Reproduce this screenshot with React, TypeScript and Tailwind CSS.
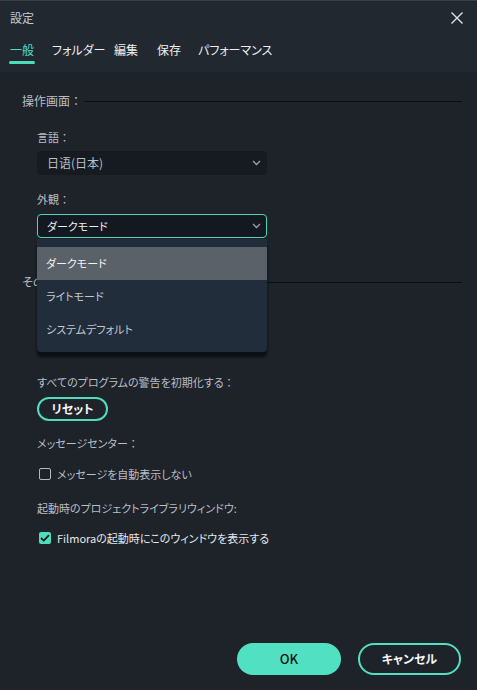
import { useState } from "react";

const font = "font-['Noto_Sans_CJK_JP','Noto_Sans',sans-serif] [font-feature-settings:'palt']";

function Chevron() {
  return (
    <svg width="9" height="6" viewBox="0 0 9 6" fill="none" className="shrink-0">
      <path d="M1 1L4.5 4.5L8 1" stroke="#9aa0a8" strokeWidth="1.3" />
    </svg>
  );
}

// full-width colon keeps its spacing even with palt on
function Colon() {
  return <span className="[font-feature-settings:normal]">：</span>;
}

function SectionHeading({ label }: { label: string }) {
  return (
    <div className="flex h-[20px] items-center pl-[22px] pr-[15px]">
      <span className="text-[12px] leading-[20px] text-[#b9bec6]">
        {label}
        <Colon />
      </span>
      <div className="ml-[2px] h-px flex-1 bg-[#0b0e13]" />
    </div>
  );
}

function Checkbox({ checked, label }: { checked: boolean; label: string }) {
  return (
    <div className="flex h-[20px] items-center">
      {checked ? (
        <span className="ml-[2px] flex h-[12px] w-[12px] items-center justify-center rounded-[2px] bg-[#4fdcbc]">
          <svg width="10" height="8" viewBox="0 0 10 8" fill="none">
            <path d="M1 4L3.8 6.6L9 1.2" stroke="#14181e" strokeWidth="1.8" />
          </svg>
        </span>
      ) : (
        <span className="ml-[2px] h-[12px] w-[12px] rounded-[2px] border-[1.5px] border-[#b4b9c0]" />
      )}
      <span
        className={`ml-[6px] text-[11px] leading-[20px] ${checked ? "text-[#e4e7eb]" : "text-[#b9bec6]"}`}
      >
        {label}
      </span>
    </div>
  );
}

export default function App() {
  const [tab] = useState("一般");
  const tabs = [
    { label: "一般", w: "w-[42px]" },
    { label: "フォルダー", w: "w-[62px]" },
    { label: "編集", w: "w-[43px]" },
    { label: "保存", w: "w-[41px]" },
    { label: "パフォーマンス", w: "w-auto" },
  ];
  const options = ["ダークモード", "ライトモード", "システムデフォルト"];

  return (
    <div className={`flex h-[690px] w-[477px] flex-col overflow-hidden border-t border-[#3a3f47] bg-[#1e232a] ${font}`}>
      {/* header */}
      <div className="bg-[#222830]">
        <div className="flex h-[33px] items-center justify-between pl-[10px] pr-[14px]">
          <span className="text-[12px] text-[#c5c9cf]">設定</span>
          <svg width="12" height="12" viewBox="0 0 12 12" fill="none">
            <path d="M0.5 0.5L11.5 11.5M11.5 0.5L0.5 11.5" stroke="#e0e3e7" strokeWidth="1.4" />
          </svg>
        </div>
        <div className="flex pb-[8px] pl-[9px] pt-[6px]">
          {tabs.map((t) => (
            <div key={t.label} className={`flex ${t.w}`}>
              <div className="flex flex-col">
                <span
                  className={`px-px text-[12px] leading-[20px] ${t.label === tab ? "text-[#4fdcbc]" : "text-[#eceef1]"}`}
                >
                  {t.label}
                </span>
                <div className={`mt-px h-[3px] rounded-full ${t.label === tab ? "bg-[#4fdcbc]" : ""}`} />
              </div>
            </div>
          ))}
        </div>
      </div>

      {/* body */}
      <div className="flex flex-1 flex-col">
        <div className="mt-[19px]">
          <SectionHeading label="操作画面" />
        </div>

        <div className="flex flex-col pl-[37px]">
          <span className="mt-[16px] text-[11px] leading-[20px] text-[#b9bec6]">
            言語<Colon />
          </span>
          <div className="mt-[4px] flex h-[24px] w-[230px] items-center justify-between rounded-[4px] bg-[#161b22] pl-[10px] pr-[6px]">
            <span className="text-[12px] text-[#b9bec6]">日语(日本)</span>
            <Chevron />
          </div>

          <span className="mt-[14px] text-[11px] leading-[20px] text-[#b9bec6]">
            外観<Colon />
          </span>
          <div className="relative z-10 mt-[5px] w-[230px]">
            <div className="flex h-[24px] items-center justify-between rounded-[4px] border border-[#4cd6b6] bg-[#141820] pl-[9px] pr-[5px]">
              <span className="text-[11px] text-[#eceef1]">ダークモード</span>
              <Chevron />
            </div>
            <div className="absolute left-0 top-[25px] w-[230px] rounded-b-[4px] rounded-t-[2px] bg-[#222d3b] pb-[6px] pt-[8px] shadow-[0_5px_3px_rgba(8,10,14,0.85)]">
              {options.map((o, i) => (
                <div
                  key={o}
                  className={`flex h-[33px] items-center pl-[9px] text-[11px] ${i === 0 ? "bg-[#5a6169] text-[#f1f3f5]" : "text-[#c3c8cf]"}`}
                >
                  {o}
                </div>
              ))}
            </div>
          </div>
        </div>

        <div className="mt-[34px]">
          <SectionHeading label="その他" />
        </div>

        <div className="flex flex-col pl-[37px]">
          <span className="mt-[80px] text-[11px] leading-[20px] text-[#b9bec6]">
            すべてのプログラムの警告を初期化する<Colon />
          </span>
          <button
            type="button"
            className="mt-[5px] flex h-[24px] w-[71px] items-center justify-center rounded-full border-2 border-[#4fdcbc] text-[12px] font-bold text-[#f3f5f7]"
          >
            リセット
          </button>

          <span className="mt-[12px] text-[11px] leading-[20px] text-[#b9bec6]">
            メッセージセンター<Colon />
          </span>
          <div className="mt-[11px]">
            <Checkbox checked={false} label="メッセージを自動表示しない" />
          </div>

          <span className="mt-[14px] text-[11px] leading-[20px] text-[#b9bec6]">
            起動時のプロジェクトライブラリウィンドウ:
          </span>
          <div className="mt-[10px]">
            <Checkbox checked label="Filmoraの起動時にこのウィンドウを表示する" />
          </div>
        </div>

        <div className="mt-auto flex justify-end gap-[17px] pb-[15px] pr-[16px]">
          <button
            type="button"
            className="h-[32px] w-[104px] rounded-full bg-[#52e0c2] text-[13px] font-medium text-[#111418]"
          >
            OK
          </button>
          <button
            type="button"
            className="h-[32px] w-[103px] rounded-full border-2 border-[#52e0c2] text-[12px] font-bold text-[#f3f5f7]"
          >
            キャンセル
          </button>
        </div>
      </div>
    </div>
  );
}
